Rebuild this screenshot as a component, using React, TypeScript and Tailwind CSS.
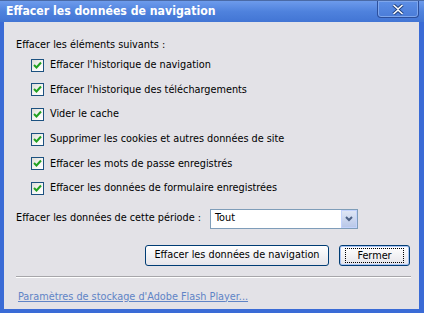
import React from "react";

const font = { fontFamily: '"DejaVu Sans Condensed", "DejaVu Sans", Tahoma, sans-serif' };

function Check() {
  return (
    <div className="w-[13px] h-[13px] border border-[#1c5180] bg-gradient-to-br from-[#dcdcd7] via-[#f4f4f1] to-white flex items-center justify-center shrink-0">
      <svg width="9" height="9" viewBox="0 0 9 9">
        <path d="M1 4 L3.5 6.5 L8 1.5" stroke="#21a121" strokeWidth="2" fill="none" />
      </svg>
    </div>
  );
}

const items = [
  "Effacer l'historique de navigation",
  "Effacer l'historique des téléchargements",
  "Vider le cache",
  "Supprimer les cookies et autres données de site",
  "Effacer les mots de passe enregistrés",
  "Effacer les données de formulaire enregistrées",
];

export default function App() {
  return (
    <div className="w-[424px] h-[313px] bg-[#3a6bd6] flex flex-col text-[10.8px] text-black" style={font}>
      <div className="h-[22px] shrink-0 flex items-center justify-between pl-[6px] pr-[5px] bg-gradient-to-b from-[#6d9bec] via-[#4f82dd] to-[#4275d4] border-t border-[#4a6aa6]">
        <span className="text-white font-bold text-[12.2px] leading-none">Effacer les données de navigation</span>
        <div className="w-[42px] h-[17px] -mt-[4px] rounded-b-[4px] border border-[#2c4f9c] border-t-0 bg-gradient-to-b from-[#5d8fe6] to-[#4a7cd8] flex items-center justify-center shadow-[inset_0_0_0_1px_#7ea6ec]">
          <svg width="12" height="11" viewBox="0 0 12 11">
            <path d="M1.5 1 L6 5 L10.5 1 M1.5 10 L6 6 L10.5 10" stroke="#1f3f7a" strokeWidth="3.4" fill="none" />
            <path d="M1.5 1 L6 5 L10.5 1 M1.5 10 L6 6 L10.5 10" stroke="#ffffff" strokeWidth="1.6" fill="none" />
          </svg>
        </div>
      </div>
      <div className="flex-1 ml-[4px] mr-[5px] mb-[4px] bg-[#e3e2e7] flex flex-col pl-[12px] pr-[7px]">
        <div className="mt-[16px] leading-[13px]">Effacer les éléments suivants :</div>
        <div className="mt-[2px] flex flex-col pl-[15px]">
          {items.map((t) => (
            <div key={t} className="h-[24.6px] flex items-center gap-[6px]">
              <Check />
              <span>{t}</span>
            </div>
          ))}
        </div>
        <div className="mt-[7px] flex items-center h-[22px]">
          <span className="w-[194px]">Effacer les données de cette période :</span>
          <div className="w-[148px] h-[20px] bg-white border border-[#7f9db9] flex items-center">
            <span className="flex-1 pl-[4px]">Tout</span>
            <div className="w-[16px] h-[18px] bg-gradient-to-b from-[#dfe6f5] to-[#b9c8e9] border border-[#c3d3fd] flex items-center justify-center">
              <svg width="8" height="6" viewBox="0 0 8 6">
                <path d="M1 1 L4 4 L7 1" stroke="#4d6185" strokeWidth="2" fill="none" />
              </svg>
            </div>
          </div>
        </div>
        <div className="mt-[15px] flex justify-end gap-[10px] pr-[2px]">
          <div className="w-[184px] h-[21px] rounded-[3px] border border-[#003c74] bg-gradient-to-b from-white to-[#e6e5ea] flex items-center justify-center">
            Effacer les données de navigation
          </div>
          <div className="w-[71px] h-[21px] rounded-[3px] border border-[#003c74] bg-gradient-to-b from-white to-[#e6e5ea] flex items-center justify-center shadow-[inset_0_0_0_1px_#a9c4f5]">
            <div className="border border-dotted border-black px-[11px] leading-[13px]">Fermer</div>
          </div>
        </div>
        <div className="mt-[10px] mr-[1px] h-[2px] border-t border-[#a7a6aa] border-b border-b-white" />
        <div className="mt-[12px] ml-[2px] text-[#5f84c6] underline leading-[13px]">Paramètres de stockage d'Adobe Flash Player...</div>
      </div>
    </div>
  );
}
